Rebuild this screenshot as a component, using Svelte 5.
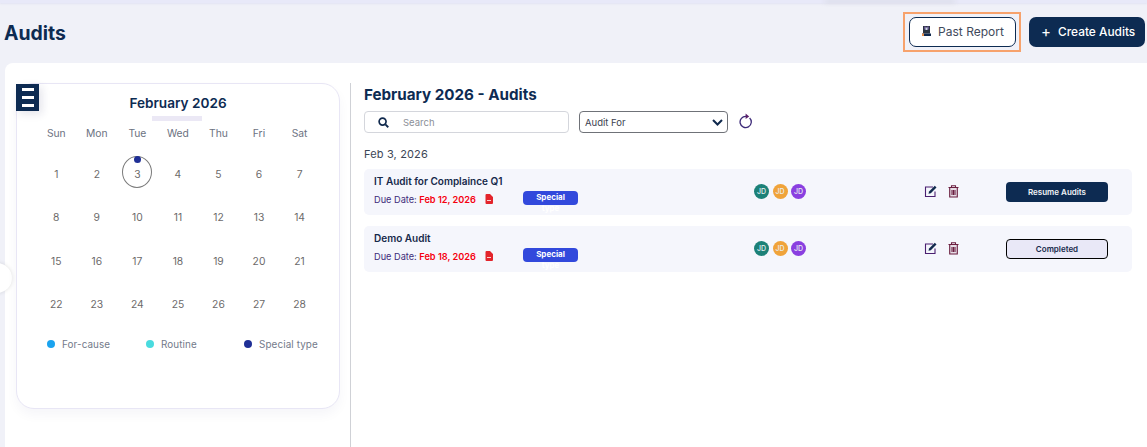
<script>
  const days = ['Sun','Mon','Tue','Wed','Thu','Fri','Sat'];
  const dates = Array.from({length:28},(_,i)=>i+1);
  const audits = [
    {name:'IT Audit for Complaince Q1',due:'Feb 12, 2026',action:'Resume Audits',cls:'resume'},
    {name:'Demo Audit',due:'Feb 18, 2026',action:'Completed',cls:'done'}
  ];
</script>

<div class="page">
  <div class="topstrip"><span class="topshade"></span></div>
  <header class="head">
    <h1>Audits</h1>
    <div class="head-actions">
      <div class="highlight">
        <button class="past">
          <svg width="11" height="12" viewBox="0 0 11 12"><path d="M2 1h7v7.5H2z" fill="#2c3440"/><path d="M3.5 1.5h1v3h-1zM6.5 1.5h1v3h-1z" fill="#8a6ad0"/><path d="M4.5 2.5h2v2.5h-2z" fill="#cfd6e6"/><path d="M1 8.5h9V11H1z" fill="#10294d"/><path d="M1 8.5h2V11H1z" fill="#e8904a"/></svg>
          <span>Past Report</span>
        </button>
      </div>
      <button class="create"><span class="plus">+</span><span>Create Audits</span></button>
    </div>
  </header>

  <main class="panel">
    <div class="tab"></div>
    <section class="left">
      <div class="cal">
        <div class="burger"><i></i><i></i><i></i></div>
        <h2>February 2026</h2>
        <div class="underline"></div>
        <div class="grid weekdays">
          {#each days as d}<span>{d}</span>{/each}
        </div>
        <div class="grid dates">
          {#each dates as n}
            <div class="date">
              {#if n === 3}
                <span class="ring"><b></b></span>
              {/if}
              <span class="num">{n}</span>
            </div>
          {/each}
        </div>
        <div class="legend">
          <span class="lg a"><i class="c1"></i>For-cause</span>
          <span class="lg b"><i class="c2"></i>Routine</span>
          <span class="lg c"><i class="c3"></i>Special type</span>
        </div>
      </div>
    </section>

    <section class="right">
      <h2 class="rtitle">February 2026 - Audits</h2>
      <div class="filters">
        <div class="search">
          <svg width="11" height="11" viewBox="0 0 12 12"><circle cx="5" cy="5" r="3.8" fill="none" stroke="#10294d" stroke-width="1.8"/><path d="M8 8l3.2 3.2" stroke="#10294d" stroke-width="2"/></svg>
          <input placeholder="Search" />
        </div>
        <div class="select">
          <span>Audit For</span>
          <svg width="11" height="7" viewBox="0 0 11 7"><path d="M1 1l4.5 4.5L10 1" fill="none" stroke="#10294d" stroke-width="2"/></svg>
        </div>
        <svg class="refresh" width="14" height="16" viewBox="0 0 14 16"><path d="M10.6 5A5.6 5.6 0 1 1 7 3.4" fill="none" stroke="#3c2a78" stroke-width="1.3"/><path d="M6.6 0.6l3.6 2.8-3.6 2.6z" fill="#5a1f6a"/></svg>
      </div>
      <div class="day">Feb 3, 2026</div>
      <div class="rows">
        {#each audits as a}
          <article class="row">
            <div class="info">
              <div class="name">{a.name}</div>
              <div class="due">
                <span class="lbl">Due Date:</span> <span class="val">{a.due}</span>
                <svg class="pdf" width="8" height="10" viewBox="0 0 8 10"><path d="M0.5 1a1 1 0 0 1 1-1H5l3 3v6a1 1 0 0 1-1 1H1.5a1 1 0 0 1-1-1z" fill="#e3242b"/><path d="M2 6.5h4" stroke="#fff" stroke-width="0.8"/></svg>
              </div>
            </div>
            <div class="badge"><span>Special type</span></div>
            <div class="avatars">
              <span class="av teal">JD</span><span class="av orange">JD</span><span class="av purple">JD</span>
            </div>
            <div class="icons">
              <svg width="14" height="13" viewBox="0 0 14 13"><path d="M9 2H1.5v9.5H11V6.5" fill="none" stroke="#4a1f70" stroke-width="1.1"/><path d="M4.5 8.8l.6-2.3L10.8.8l1.7 1.7L6.8 8.2z" fill="#10294d"/></svg>
              <svg width="11" height="13" viewBox="0 0 11 13"><path d="M1.7 3h7.6v9H1.7z" fill="#e6dde6"/><path d="M3.5 2V.8h4V2M.5 2.5h10M1.7 3v9h7.6V3M4 5v5M5.5 5v5M7 5v5" fill="none" stroke="#6b1f40" stroke-width="1.1"/></svg>
            </div>
            <button class="act {a.cls}">{a.action}</button>
          </article>
        {/each}
      </div>
    </section>
  </main>
</div>

<style>
  :global(body){margin:0;background:#f0f1f8;font-family:Inter,"Liberation Sans",sans-serif;overflow:hidden}
  .page{position:relative;width:1147px;height:447px;overflow:hidden;background:#f0f1f8;color:#10294d}
  .topstrip{position:relative;height:3px;background:#e8e9f9;box-shadow:0 1px 2px rgba(200,204,235,.35)}
  .topshade{position:absolute;left:825px;top:0;width:130px;height:3px;background:#d9dbe6;filter:blur(2px)}
  .head{height:60px;display:flex;justify-content:space-between;align-items:flex-start;box-sizing:border-box;padding:9px 2px 0 4px}
  h1{margin:9px 0 0;font-size:19.4px;line-height:24px;font-weight:700;color:#0d2b52}
  .head-actions{display:flex;align-items:center;gap:8px}
  .highlight{border:2px solid #f7a26c;padding:3px 3px 3px 4px}
  button{font-family:inherit;cursor:pointer}
  .past{width:107px;height:30px;box-sizing:border-box;background:#fff;border:1px solid #0d2b52;border-radius:7px;display:flex;align-items:center;justify-content:center;gap:6px;font-size:12px;color:#3f4a5c;padding:0 0 2px}
  .create{width:116px;height:30px;background:#0d2b52;color:#fff;border:none;border-radius:7px;display:flex;align-items:center;gap:7px;font-size:11.9px;font-weight:500;padding:0 0 1px 12px}
  .plus{font-size:15px;line-height:15px;font-weight:400}
  .panel{position:relative;height:384px;margin-left:5px;background:#fff;border-radius:8px 0 0 0;display:flex;box-sizing:border-box;padding-top:20px}
  .tab{position:absolute;left:-23px;top:200px;width:30px;height:30px;border-radius:50%;background:#fff;box-shadow:0 0 4px rgba(0,0,0,.12)}
  .left{width:346px;box-sizing:border-box;padding-left:11px;border-right:1px solid #cfd1d6;flex:none}
  .cal{position:relative;width:324px;height:326px;box-sizing:border-box;border:1px solid #e8e6f5;border-radius:18px;background:#fff;box-shadow:0 6px 12px rgba(30,30,90,.04);padding:11px 0 0}
  .burger{position:absolute;left:-1px;top:0;width:23px;height:27px;background:#0d2b52;box-shadow:3px 3px 8px rgba(30,30,90,.12);display:flex;flex-direction:column;justify-content:space-between;align-items:center;box-sizing:border-box;padding:4px 0}
  .burger i{display:block;width:12px;height:3px;background:#fff}
  .cal h2{margin:0;text-align:center;font-size:13.6px;line-height:17px;font-weight:600;color:#0d2b52}
  .underline{width:50px;height:5px;background:#ebe8f5;margin:4px 0 0 135px}
  .grid{display:grid;grid-template-columns:repeat(7,40.55px);padding-left:19px}
  .weekdays{margin-top:5px;font-size:10.3px;line-height:14px;color:#6c727f;justify-items:center}
  .dates{margin-top:18px;grid-auto-rows:43.4px;font-size:10.3px;color:#6c6a6a;justify-items:center}
  .date{position:relative;height:32px;width:32px;display:flex;align-items:center;justify-content:center}
  .ring{position:absolute;left:1px;top:-2px;width:28px;height:30px;border:1px solid #7b7b7b;border-radius:50%}
  .ring b{position:absolute;left:10.5px;top:-1.5px;width:7px;height:7px;border-radius:50%;background:#1f2f96}
  .legend{position:relative;height:14px;margin-top:6px;font-size:9.9px;color:#737a8a;letter-spacing:.1px}
  .lg{position:absolute;top:0;display:flex;align-items:center;gap:7px;white-space:nowrap}
  .lg i{width:8px;height:8px;border-radius:50%;display:block}
  .a{left:30px}.b{left:129px}.c{left:227px}
  .c1{background:#1aa3ef}.c2{background:#4adbdf}.c3{background:#1f2f96}
  .right{padding:0 0 0 13px;flex:1}
  .rtitle{margin:2px 0 0;font-size:15.2px;line-height:19px;font-weight:700;color:#0d2b52}
  .filters{display:flex;align-items:center;margin-top:7px;height:22px}
  .search{width:205px;height:22px;box-sizing:border-box;border:1px solid #d4d6dc;border-radius:4px;display:flex;align-items:center;padding-left:13px;gap:14px}
  .search input{border:none;outline:none;background:none;font:inherit;font-size:9.5px;width:120px;padding:0}
  .search input::placeholder{color:#8b8f98;opacity:1}
  .select{width:149px;height:22px;margin-left:10px;box-sizing:border-box;border:1px solid #6f7278;border-radius:4px;display:flex;align-items:center;justify-content:space-between;padding:0 4px 0 5px;font-size:9.5px;color:#3b4250}
  .refresh{margin-left:11px;margin-top:-2px}
  .day{margin-top:14px;font-size:11px;line-height:14px;color:#3c4656;letter-spacing:.15px}
  .rows{margin-top:8px;display:flex;flex-direction:column;gap:11px;width:768px}
  .row{height:46px;background:#f5f6fc;border-radius:5px;position:relative;display:grid;grid-template-columns:149px 231px 171px 81px 102px;align-items:center;padding-left:10px;box-sizing:border-box}
  .name{font-size:10px;line-height:12px;font-weight:600;color:#16294a;margin-top:-3px}
  .due{margin-top:7px;font-size:9.2px;line-height:12px;white-space:nowrap}
  .lbl{color:#3e2c7a}
  .val{color:#f5000f;font-weight:600}
  .pdf{margin-left:6px;vertical-align:-1px}
  .badge{width:55px;height:14px;background:#3249dc;border-radius:4px;color:#fff;font-size:8px;line-height:11px;font-weight:700;text-align:center;margin-top:12px}
  .badge span{display:block;width:30px;margin:1px auto 0}
  .avatars{display:flex;gap:3.5px;margin-top:-2px}
  .av{width:15px;height:15px;border-radius:50%;color:#e9eef0;font-size:7px;font-weight:500;display:flex;align-items:center;justify-content:center}
  .teal{background:#1c8178}.orange{background:#f0a33a}.purple{background:#8a3fe0}
  .icons{display:flex;align-items:center;gap:10px;margin:-1px 0 0 -1px}
  .act{width:102px;height:20px;box-sizing:border-box;border-radius:4px;font-size:8px;font-weight:600;padding:0}
  .resume{background:#0d2b52;color:#f1f3f7;border:none}
  .done{background:#e9e8f7;color:#16294a;border:1px solid #000}
</style>
